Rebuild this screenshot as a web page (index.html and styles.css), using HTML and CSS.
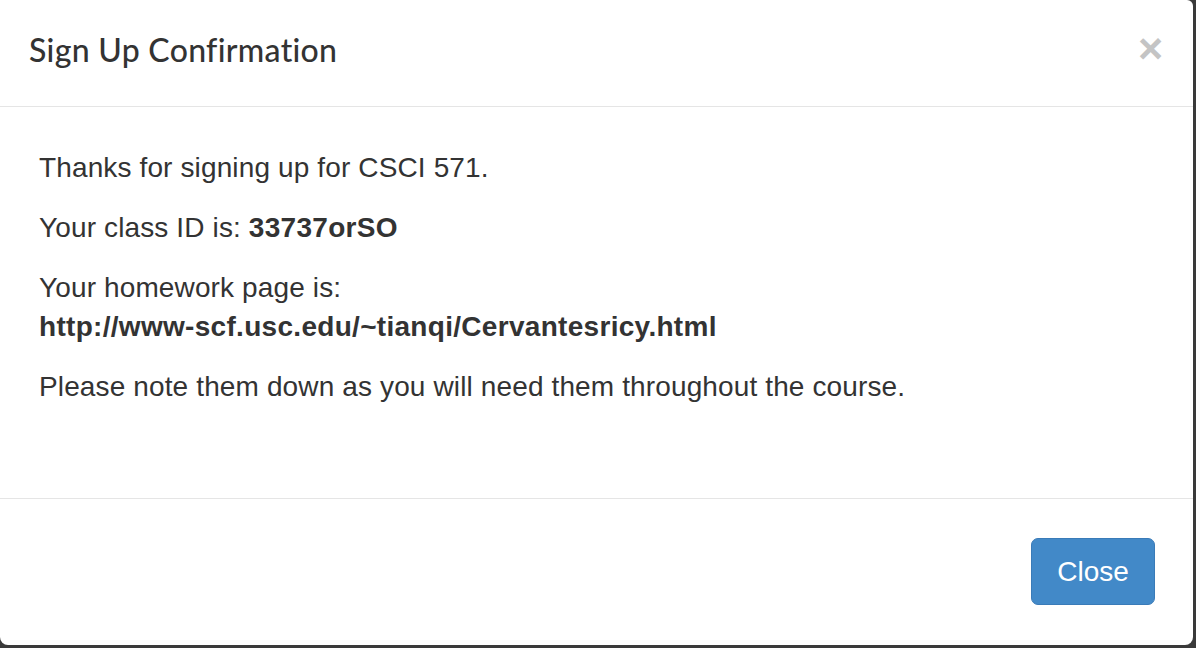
FILE: index.html
```html
<!DOCTYPE html>
<html>
<head>
<meta charset="utf-8">
<link rel="stylesheet" href="styles.css">
</head>
<body>
<div class="modal">
  <div class="modal-header">
    <h4 class="modal-title">Sign Up Confirmation</h4>
    <button class="close" type="button">&times;</button>
  </div>
  <div class="modal-body">
    <p>Thanks for signing up for CSCI 571.</p>
    <p>Your class ID is: <b>33737orSO</b></p>
    <p>Your homework page is:<br><b>http://www-scf.usc.edu/~tianqi/Cervantesricy.html</b></p>
    <p>Please note them down as you will need them throughout the course.</p>
  </div>
  <div class="modal-footer">
    <button class="btn" type="button">Close</button>
  </div>
</div>
</body>
</html>
```

FILE: styles.css
```css
html, body {
  margin: 0;
  padding: 0;
  width: 1196px;
  height: 648px;
  background: #3a3a3a;
  overflow: hidden;
}

.modal {
  width: 1193px;
  height: 645px;
  background: #fff;
  border-radius: 0 6px 8px 8px;
  display: flex;
  flex-direction: column;
  font-family: "Liberation Sans", Arial, sans-serif;
  color: #333;
}

.modal-header {
  height: 107px;
  box-sizing: border-box;
  border-bottom: 1px solid #e5e5e5;
  display: flex;
  align-items: center;
  justify-content: space-between;
  padding: 0 30px 8px 29px;
}

.modal-title {
  margin: 0;
  font-family: Lato, "Open Sans", sans-serif;
  font-weight: 500;
  font-size: 32px;
  color: #333;
  letter-spacing: 0.3px;
}

.close {
  border: 0;
  background: none;
  padding: 0;
  margin: 0 0 2px 0;
  font-family: "Liberation Sans", Arial, sans-serif;
  font-weight: bold;
  font-size: 43px;
  line-height: 1;
  color: #c4c4c4;
}

.modal-body {
  flex: 1;
  padding: 41px 39px 0 39px;
  font-size: 28px;
  line-height: 39px;
  letter-spacing: 0.13px;
}

.modal-body b {
  letter-spacing: 0.3px;
}

.modal-body p {
  margin: 0 0 21px 0;
}

.modal-footer {
  height: 147px;
  box-sizing: border-box;
  border-top: 1px solid #e5e5e5;
  display: flex;
  justify-content: flex-end;
  align-items: flex-start;
  padding: 39px 38px 0 0;
}

.btn {
  width: 124px;
  height: 67px;
  box-sizing: border-box;
  background: #4289c8;
  border: 1px solid #3a7bb8;
  border-radius: 7px;
  color: #fff;
  font-family: "Liberation Sans", Arial, sans-serif;
  font-size: 28px;
  padding: 0;
}
```
